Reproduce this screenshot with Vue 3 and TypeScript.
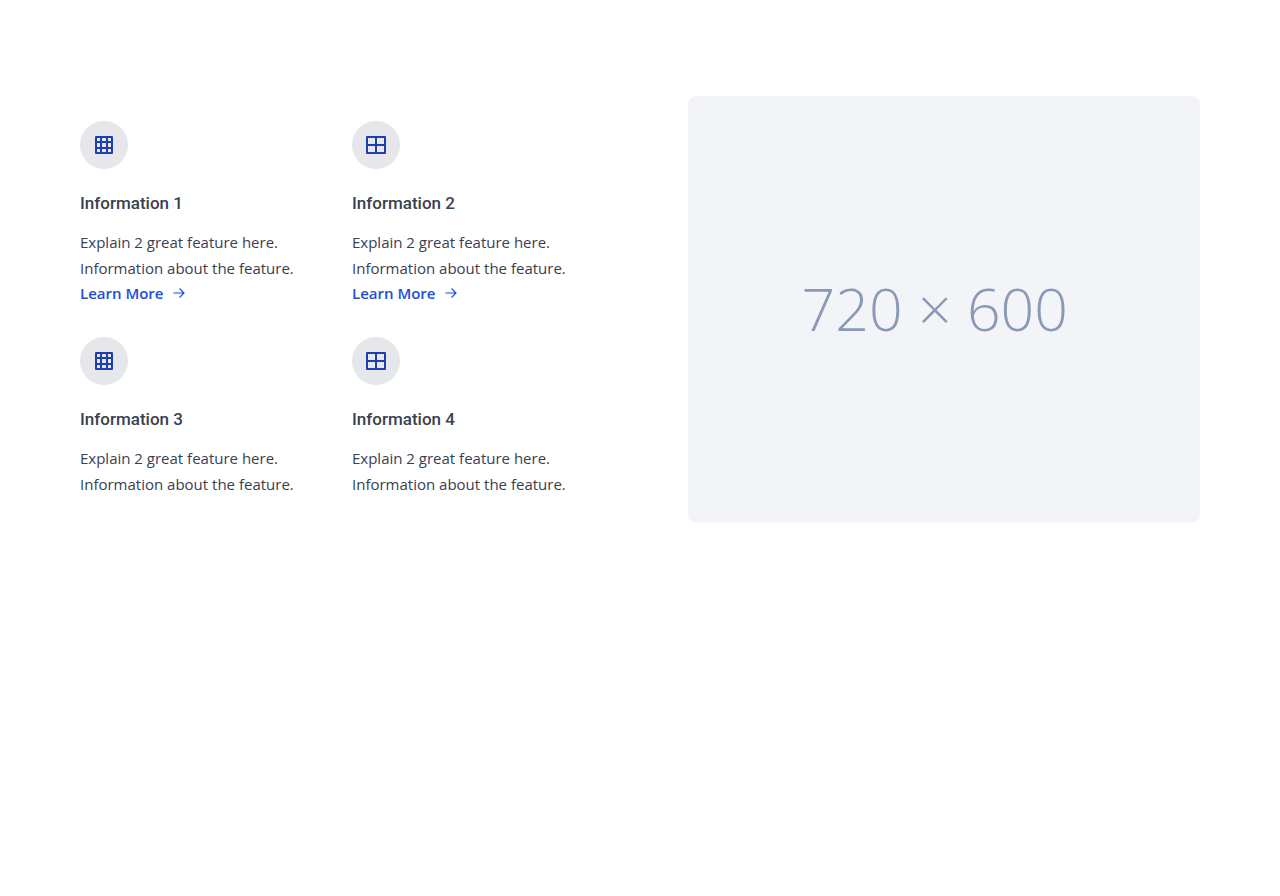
<script setup lang="ts">
interface Feature {
  title: string
  icon: 'grid' | 'window'
  link: boolean
}

const features: Feature[] = [
  { title: 'Information 1', icon: 'grid', link: true },
  { title: 'Information 2', icon: 'window', link: true },
  { title: 'Information 3', icon: 'grid', link: false },
  { title: 'Information 4', icon: 'window', link: false },
]
</script>

<template>
  <section class="section">
    <div class="features">
      <article v-for="feature in features" :key="feature.title">
        <div class="badge">
          <svg v-if="feature.icon === 'grid'" width="24" height="24" viewBox="0 0 24 24" aria-hidden="true">
            <rect x="4" y="4" width="16" height="16" />
            <path d="M9 4v16M15 4v16M4 9h16M4 15h16" />
          </svg>
          <svg v-else width="24" height="24" viewBox="0 0 24 24" aria-hidden="true">
            <rect x="3" y="4" width="18" height="16" />
            <path d="M12 4v16M3 12h18" />
          </svg>
        </div>
        <h2>{{ feature.title }}</h2>
        <p>Explain 2 great feature here. Information about the feature.</p>
        <a v-if="feature.link" href="#" class="more">
          <span>Learn More</span>
          <svg class="arrow" width="12" height="12" viewBox="0 0 12 12" aria-hidden="true">
            <path d="M0.5 6h10.5M6.5 1.5L11 6l-4.5 4.5" />
          </svg>
        </a>
      </article>
    </div>
    <svg class="placeholder" viewBox="0 0 720 600" role="img" aria-label="720 × 600">
      <rect width="720" height="600" />
      <text x="347" y="330" text-anchor="middle">720 × 600</text>
    </svg>
  </section>
</template>

<style>
body {
  margin: 0;
  background: #fff;
}
</style>

<style scoped>
.section {
  display: grid;
  grid-template-columns: 1fr 1fr;
  gap: 96px;
  align-items: center;
  padding: 96px 80px;
  font-family: "Open Sans", "Noto Sans", sans-serif;
  color: #374151;
}
.features {
  display: grid;
  grid-template-columns: 1fr 1fr;
  gap: 32px;
}
.badge {
  display: flex;
  align-items: center;
  justify-content: center;
  width: 48px;
  height: 48px;
  margin-bottom: 20px;
  border-radius: 50%;
  background: #e5e7eb;
}
.badge svg {
  fill: none;
  stroke: #1e40af;
  stroke-width: 2;
  stroke-linejoin: round;
}
h2 {
  margin: 0 0 12px;
  font-family: Roboto, "Open Sans", sans-serif;
  font-size: 17px;
  line-height: 28px;
  font-weight: 500;
}
p {
  margin: 0;
  font-size: 15px;
  line-height: 26px;
}
.more {
  display: flex;
  align-items: center;
  gap: 9px;
  font-size: 15px;
  line-height: 24px;
  font-weight: 600;
  color: #1d4ed8;
  text-decoration: none;
}
.arrow {
  fill: none;
  stroke: currentColor;
  stroke-width: 1.2;
}
.placeholder {
  display: block;
  width: 100%;
  height: auto;
  border-radius: 8px;
}
.placeholder rect {
  fill: #f2f4f8;
}
.placeholder text {
  fill: #8a99b5;
  font-size: 83px;
  font-weight: 300;
}
</style>
